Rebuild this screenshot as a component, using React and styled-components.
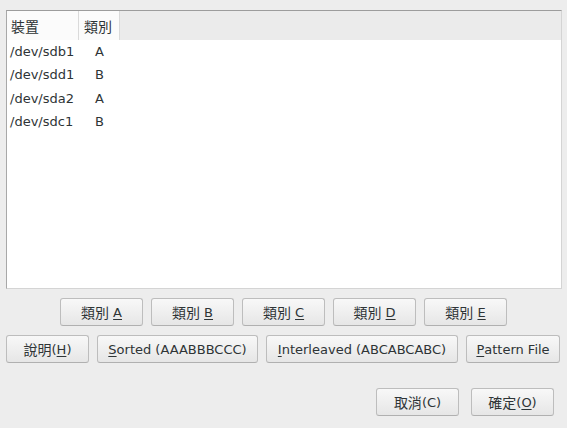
import React from "react";
import styled, { createGlobalStyle } from "styled-components";

const Global = createGlobalStyle`
  html, body { margin: 0; padding: 0; background: #ededed; }
  body {
    font-family: "DejaVu Sans", "Noto Sans CJK TC", sans-serif;
    font-size: 13px;
    color: #2e3436;
  }
`;

const Page = styled.div`
  width: 567px;
  height: 428px;
  box-sizing: border-box;
  padding: 10px 5px 0 6px;
  display: flex;
  flex-direction: column;
`;

const Tree = styled.div`
  height: 279px;
  box-sizing: border-box;
  background: #ffffff;
  border: 1px solid;
  border-color: #9c9c9c #d4d4d4 #d4d4d4 #a8a8a8;
  display: flex;
  flex-direction: column;
`;

const HeaderBar = styled.div`
  display: flex;
  height: 29px;
  background: #ebebeb;
`;

const HeadCell = styled.div`
  width: ${(p) => p.$w}px;
  box-sizing: border-box;
  padding-left: ${(p) => p.$pad}px;
  display: flex;
  align-items: center;
  background: #fbfbfb;
  border-right: 1px solid #dadada;
`;

const Row = styled.div`
  display: flex;
  height: 23.33px;
  align-items: center;
`;

const Cell = styled.div`
  width: ${(p) => p.$w}px;
  box-sizing: border-box;
  padding-left: ${(p) => p.$pad || 0}px;
  text-align: ${(p) => p.$align || "left"};
`;

const ButtonRow = styled.div`
  display: flex;
  gap: ${(p) => p.$gap}px;
  justify-content: ${(p) => p.$justify};
  margin-top: ${(p) => p.$top}px;
  padding-right: ${(p) => p.$right || 0}px;
  padding-left: ${(p) => p.$left || 0}px;
`;

const Button = styled.button`
  width: ${(p) => p.$w}px;
  height: 28px;
  box-sizing: border-box;
  margin: 0;
  padding: 0;
  border: 1px solid #bdbdbd;
  border-bottom-color: #b0b0b0;
  border-radius: 3px;
  background: linear-gradient(#f8f8f8, #e6e6e6);
  font-family: "DejaVu Sans", "Noto Sans CJK TC", sans-serif;
  font-size: 13px;
  color: #2e3436;
  display: flex;
  align-items: center;
  justify-content: center;
  white-space: nowrap;
`;

const Cjk = styled.span`
  font-family: "Noto Sans CJK TC", sans-serif;
  font-size: 14px;
  line-height: 1;
`;

const Key = styled.span`
  text-decoration: underline;
  text-underline-offset: 2px;
`;

const rows = [
  ["/dev/sdb1", "A"],
  ["/dev/sdd1", "B"],
  ["/dev/sda2", "A"],
  ["/dev/sdc1", "B"],
];

export default function App() {
  return (
    <>
      <Global />
      <Page>
        <Tree>
          <HeaderBar>
            <HeadCell $w={72} $pad={4}><Cjk>裝置</Cjk></HeadCell>
            <HeadCell $w={41} $pad={5}><Cjk>類別</Cjk></HeadCell>
          </HeaderBar>
          {rows.map(([d, c]) => (
            <Row key={d}>
              <Cell $w={72} $pad={3}>{d}</Cell>
              <Cell $w={41} $align="center">{c}</Cell>
            </Row>
          ))}
        </Tree>
        <ButtonRow $gap={8} $justify="center" $top={9} $right={1}>
          {["A", "B", "C", "D", "E"].map((k) => (
            <Button key={k} $w={83}>
              <Cjk>類別</Cjk>&nbsp;<Key>{k}</Key>
            </Button>
          ))}
        </ButtonRow>
        <ButtonRow $gap={8} $justify="flex-start" $top={9}>
          <Button $w={83}>
            <Cjk>說明</Cjk>(<Key>H</Key>)
          </Button>
          <Button $w={161}>
            <Key>S</Key>orted (AAABBBCCC)
          </Button>
          <Button $w={192}>
            <Key>I</Key>nterleaved (ABCABCABC)
          </Button>
          <Button $w={94}>
            <Key>P</Key>attern File
          </Button>
        </ButtonRow>
        <ButtonRow $gap={12} $justify="flex-end" $top={25} $right={8}>
          <Button $w={83}><Cjk>取消</Cjk>(C)</Button>
          <Button $w={83}>
            <Cjk>確定</Cjk>(<Key>O</Key>)
          </Button>
        </ButtonRow>
      </Page>
    </>
  );
}
